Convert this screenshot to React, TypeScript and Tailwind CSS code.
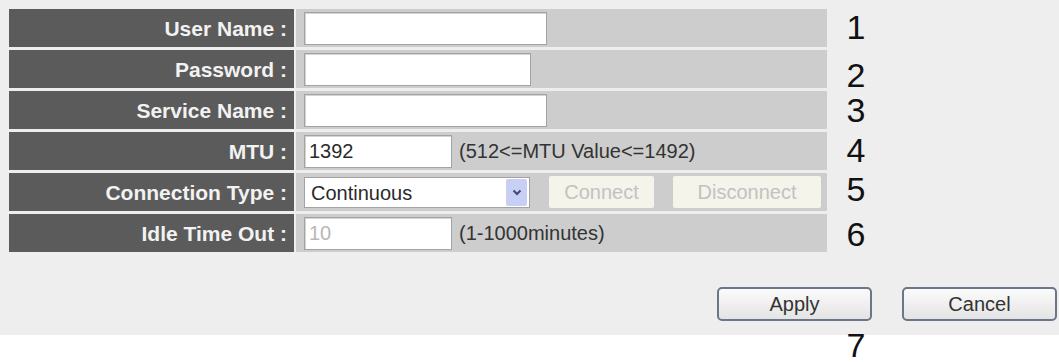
import { ReactNode } from "react";

const ARIAL = "font-['Liberation_Sans',Arial,sans-serif]";

function Row({ label, children }: { label: string; children: ReactNode }) {
  return (
    <div className="flex h-[38px] gap-[2px]">
      <div className="flex w-[285px] shrink-0 items-center justify-end bg-[#5b5b5b] pr-[7px]">
        <span className={`${ARIAL} text-[21px] font-bold leading-none text-[#f2f2f2]`}>{label}</span>
      </div>
      <div className="flex flex-1 items-center bg-[#cdcdcd] pl-[8px]">{children}</div>
    </div>
  );
}

function TextBox({ width, value = "", disabled = false }: { width: string; value?: string; disabled?: boolean }) {
  return (
    <input
      readOnly
      value={value}
      className={`${width} ${ARIAL} h-[33px] border border-[#a3a3a3] bg-white pl-[4px] text-[20px] shadow-[inset_1px_1px_0_#d4d4d4] outline-none ${
        disabled ? "text-[#b8b8b8]" : "text-[#2a2a2a]"
      }`}
    />
  );
}

function GhostButton({ width, children }: { width: string; children: ReactNode }) {
  return (
    <div className={`${width} ${ARIAL} flex h-[32px] items-center justify-center rounded-[2px] bg-[#f4f4ea] text-[20px] text-[#c2c2c2]`}>
      {children}
    </div>
  );
}

function ActionButton({ children }: { children: ReactNode }) {
  return (
    <button
      className={`${ARIAL} h-[34px] w-[155px] rounded-[5px] border-2 border-[#6b7686] bg-gradient-to-b from-[#fbfbfb] to-[#e4e4e4] text-[20px] text-[#333]`}
    >
      {children}
    </button>
  );
}

// callout numbers, placed against the reference picture
const MARKS = [
  { n: "1", top: "top-[12px]" },
  { n: "2", top: "top-[60px]" },
  { n: "3", top: "top-[95px]" },
  { n: "4", top: "top-[135px]" },
  { n: "5", top: "top-[174px]" },
  { n: "6", top: "top-[219px]" },
  { n: "7", top: "top-[330px]" },
];

export default function App() {
  return (
    <div className="relative h-[362px] w-[1059px] overflow-hidden bg-white">
      <div className="h-[335px] bg-[#eeeeee] pl-[9px] pt-[9px]">
        {/* settings table */}
        <div className="flex w-[818px] flex-col gap-[3px]">
          <Row label="User Name :">
            <TextBox width="w-[243px]" />
          </Row>
          <Row label="Password :">
            <TextBox width="w-[227px]" />
          </Row>
          <Row label="Service Name :">
            <TextBox width="w-[243px]" />
          </Row>
          <Row label="MTU :">
            <TextBox width="w-[148px]" value="1392" />
            <span className={`${ARIAL} ml-[7px] text-[20px] text-[#333]`}>(512&lt;=MTU Value&lt;=1492)</span>
          </Row>
          <Row label="Connection Type :">
            <div className="relative h-[31px] w-[226px] border border-[#a3a3a3] bg-white">
              <select
                className={`${ARIAL} h-full w-full appearance-none bg-transparent pl-[6px] text-[20px] text-[#2a2a2a] outline-none`}
                defaultValue="Continuous"
              >
                <option>Continuous</option>
                <option>Connect on Demand</option>
                <option>Manual</option>
              </select>
              <span className="pointer-events-none absolute right-[2px] top-[1px] flex h-[27px] w-[21px] items-center justify-center rounded-[2px] bg-[#c7cff4]">
                <svg width="10" height="7" viewBox="0 0 10 7" fill="none">
                  <path d="M1.5 1.5 5 5l3.5-3.5" stroke="#3d4a78" strokeWidth="2" />
                </svg>
              </span>
            </div>
            <div className="ml-[19px] flex gap-[19px]">
              <GhostButton width="w-[105px]">Connect</GhostButton>
              <GhostButton width="w-[148px]">Disconnect</GhostButton>
            </div>
          </Row>
          <Row label="Idle Time Out :">
            <TextBox width="w-[148px]" value="10" disabled />
            <span className={`${ARIAL} ml-[7px] text-[20px] text-[#333]`}>(1-1000minutes)</span>
          </Row>
        </div>

        {/* actions */}
        <div className="mt-[35px] flex justify-end gap-[30px] pr-[2px]">
          <ActionButton>Apply</ActionButton>
          <ActionButton>Cancel</ActionButton>
        </div>
      </div>

      {MARKS.map((m) => (
        <span
          key={m.n}
          className={`${ARIAL} ${m.top} absolute left-[838px] h-[30px] w-[36px] text-center text-[34px] leading-[30px] text-[#111]`}
        >
          {m.n}
        </span>
      ))}
    </div>
  );
}
